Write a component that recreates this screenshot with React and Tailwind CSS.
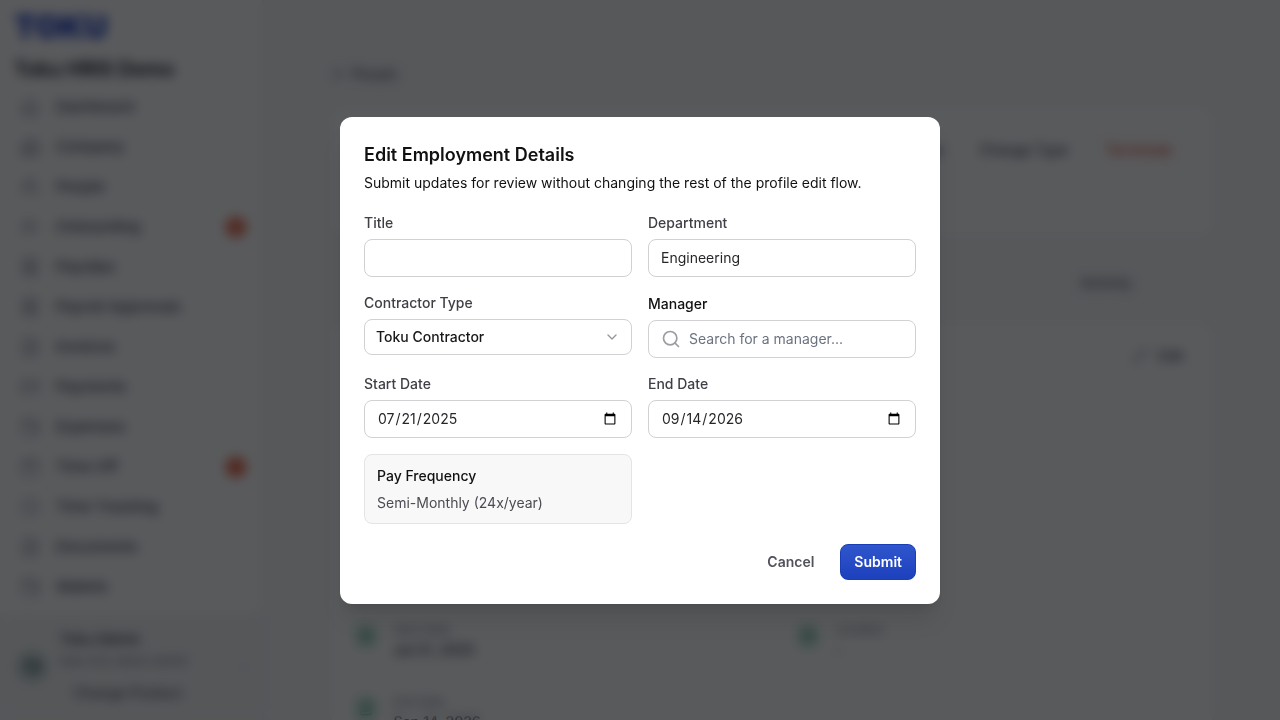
import { useState } from "react";
import {
  ArrowLeft,
  Building2,
  Calendar,
  ChevronDown,
  ChevronRight,
  Clock,
  CreditCard,
  FileText,
  House,
  Pencil,
  Receipt,
  Search,
  UserPlus,
  Users,
  Wallet,
} from "lucide-react";

const navItems = [
  { label: "Dashboard", icon: House },
  { label: "Company", icon: Building2 },
  { label: "People", icon: Users },
  { label: "Onboarding", icon: UserPlus, badge: 2 },
  { label: "Payslips", icon: Receipt },
  { label: "Payroll Approvals", icon: Receipt },
  { label: "Invoices", icon: FileText },
  { label: "Payments", icon: CreditCard },
  { label: "Expenses", icon: Wallet },
  { label: "Time Off", icon: Calendar, badge: 1 },
  { label: "Time Tracking", icon: Clock },
  { label: "Documents", icon: FileText },
  { label: "Wallets", icon: Wallet },
];

const detailRows = [
  [],
  [],
  [],
  [["Start Date", "Jul 21, 2025"], ["Location", "-"]],
  [["End Date", "Sep 14, 2026"]],
];

const labelClass = "text-sm leading-5 font-medium text-[#3f3f46]";
const inputClass =
  "w-full h-[38px] rounded-lg border border-[#d1d1d4] bg-white px-3 text-sm leading-5 text-[#27272a] outline-none";

/* ======================
SIDEBAR
====================== */

function Sidebar() {
  return (
    <aside className="w-[263px] shrink-0 flex flex-col bg-white border-r border-gray-200">
      <div className="flex-1 px-3.5 pt-[9px]">
        <div className="text-[32px] leading-9 font-black text-[#1d3fc4]">
          TOKU
        </div>
        <h2 className="mt-3 text-xl leading-6 font-semibold text-gray-950">
          Toku HRIS Demo
        </h2>

        <nav className="mt-2 flex flex-col gap-1">
          {navItems.map(({ label, icon: Icon, badge }) => (
            <a
              key={label}
              href="#"
              className="flex h-9 items-center gap-4 pl-1.5 pr-0.5 text-[15px] font-medium text-gray-700"
            >
              <Icon size={20} strokeWidth={1.5} className="text-gray-500" />
              {label}
              {badge && (
                <span className="ml-auto flex h-5 w-5 items-center justify-center rounded-full bg-[#e5532f] text-xs text-white">
                  {badge}
                </span>
              )}
            </a>
          ))}
        </nav>
      </div>

      <div className="flex h-[107px] items-center gap-3 bg-[#f5f5f6] pl-4 pr-3">
        <div className="flex h-8 w-8 items-center justify-center rounded-full bg-[#c4d4d0] text-sm font-semibold text-[#35524a]">
          TA
        </div>
        <div className="flex-1">
          <p className="text-sm leading-5 font-semibold text-gray-700">
            Toku Admin
          </p>
          <p className="mt-1 text-xs leading-4 text-gray-500">
            toku-hris-demo-admin
          </p>
          <button className="mt-3.5 px-3.5 text-sm leading-5 font-medium text-gray-600">
            Change Product
          </button>
        </div>
        <ChevronRight size={12} className="text-gray-400" />
      </div>
    </aside>
  );
}

/* ======================
PERFIL
====================== */

function ProfilePage() {
  return (
    <main className="flex-1 bg-[#f7f7f8] px-16 pt-16">
      <div className="mx-auto max-w-[880px]">
        <a href="#" className="flex h-5 items-center gap-1.5 text-sm text-gray-700">
          <ArrowLeft size={14} />
          People
        </a>

        <div className="mt-6 flex h-[127px] items-start justify-end gap-2 rounded-xl bg-white px-6 pt-6">
          <button className="h-9 rounded-lg px-3.5 text-sm font-medium text-gray-700">
            Message
          </button>
          <button className="h-9 rounded-lg px-3.5 text-sm font-medium text-gray-700">
            Change Type
          </button>
          <button className="h-9 rounded-lg border border-gray-200 px-3.5 text-sm font-medium text-[#d9442f]">
            Terminate
          </button>
        </div>

        <div className="flex h-[88px] items-center justify-end px-20 pt-2 text-sm font-medium text-gray-600">
          Activity
        </div>

        <section className="rounded-xl bg-white px-2">
          <div className="flex h-[66px] items-center justify-end px-5">
            <button className="flex items-center gap-2.5 text-sm font-medium text-gray-700">
              <Pencil size={16} strokeWidth={1.5} />
              Edit
            </button>
          </div>
          {detailRows.map((row, i) => (
            <div
              key={i}
              className="grid h-[72px] grid-cols-2 gap-x-11 border-t border-gray-200 px-3 pt-4"
            >
              {row.map(([label, value]) => (
                <div key={label} className="flex gap-3.5">
                  <div className="flex h-7 w-7 items-center justify-center rounded-lg bg-[#e6f6ef]">
                    <FileText size={16} className="text-[#0f8a5f]" />
                  </div>
                  <div>
                    <p className="text-xs leading-4 text-gray-500">{label}</p>
                    <p className="text-sm leading-6 font-medium text-gray-800">
                      {value}
                    </p>
                  </div>
                </div>
              ))}
            </div>
          ))}
        </section>
      </div>
    </main>
  );
}

/* ======================
MODAL
====================== */

function EditEmploymentModal() {
  const [form, setForm] = useState({
    title: "",
    department: "Engineering",
    contractorType: "toku",
    manager: "",
    startDate: "2025-07-21",
    endDate: "2026-09-14",
  });

  const handleChange = (e) => {
    setForm({ ...form, [e.target.name]: e.target.value });
  };

  return (
    <div className="fixed inset-0 flex items-center justify-center bg-[#08090c]/67 backdrop-blur-[6px]">
      <form
        role="dialog"
        aria-labelledby="modal-title"
        onSubmit={(e) => e.preventDefault()}
        className="w-full max-w-[600px] rounded-xl bg-white p-6 shadow-xl"
      >
        <h1
          id="modal-title"
          className="text-lg leading-7 font-semibold text-[#111113]"
        >
          Edit Employment Details
        </h1>
        <p className="mt-1 text-sm leading-5 text-[#111113]">
          Submit updates for review without changing the rest of the profile
          edit flow.
        </p>

        <div className="mt-5 grid grid-cols-2 gap-4">
          <div className="flex flex-col gap-1.5">
            <label htmlFor="title" className={labelClass}>
              Title
            </label>
            <input
              id="title"
              name="title"
              type="text"
              value={form.title}
              onChange={handleChange}
              className={inputClass}
            />
          </div>

          <div className="flex flex-col gap-1.5">
            <label htmlFor="department" className={labelClass}>
              Department
            </label>
            <input
              id="department"
              name="department"
              type="text"
              value={form.department}
              onChange={handleChange}
              className={inputClass}
            />
          </div>

          <div className="flex flex-col gap-1.5">
            <label htmlFor="contractorType" className={labelClass}>
              Contractor Type
            </label>
            <div className="relative">
              <select
                id="contractorType"
                name="contractorType"
                value={form.contractorType}
                onChange={handleChange}
                className="block h-9 w-full appearance-none rounded-lg border border-[#d1d1d4] bg-white px-[11px] text-sm leading-5 font-medium text-[#18181b] outline-none"
              >
                <option value="toku">Toku Contractor</option>
                <option value="direct">Direct Contractor</option>
              </select>
              <ChevronDown
                size={16}
                strokeWidth={2}
                className="pointer-events-none absolute top-2.5 right-3 text-[#96969c]"
              />
            </div>
          </div>

          <div className="flex flex-col gap-1.5">
            <label
              htmlFor="manager"
              className="text-sm leading-[21px] font-medium text-[#111113]"
            >
              Manager
            </label>
            <div className="flex h-[38px] items-center gap-2 rounded-lg border border-[#d1d1d4] bg-white px-3">
              <Search
                size={20}
                strokeWidth={2}
                className="shrink-0 text-[#9c9ca3]"
              />
              <input
                id="manager"
                name="manager"
                type="text"
                placeholder="Search for a manager..."
                value={form.manager}
                onChange={handleChange}
                className="w-full bg-transparent text-sm leading-5 outline-none placeholder:text-[#6b7280]"
              />
            </div>
          </div>

          <div className="flex flex-col gap-1.5">
            <label htmlFor="startDate" className={labelClass}>
              Start Date
            </label>
            <input
              id="startDate"
              name="startDate"
              type="date"
              value={form.startDate}
              onChange={handleChange}
              className={inputClass}
            />
          </div>

          <div className="flex flex-col gap-1.5">
            <label htmlFor="endDate" className={labelClass}>
              End Date
            </label>
            <input
              id="endDate"
              name="endDate"
              type="date"
              value={form.endDate}
              onChange={handleChange}
              className={inputClass}
            />
          </div>

          <div className="flex flex-col gap-1.5 rounded-lg border border-[#e4e4e7] bg-[#f8f8f8] px-3 py-2.5 text-sm">
            <p className="leading-[21px] font-medium text-[#111113]">
              Pay Frequency
            </p>
            <p className="leading-[21px] text-[#4b4b54]">
              Semi-Monthly (24x/year)
            </p>
          </div>
        </div>

        <div className="mt-5 flex justify-end gap-3">
          <button
            type="button"
            className="h-9 rounded-lg px-3.5 text-sm font-semibold text-[#52525b]"
          >
            Cancel
          </button>
          <button
            type="submit"
            className="h-9 rounded-lg border border-[#1c3eb4] bg-linear-to-b from-[#3056cd] to-[#1d40bd] px-[13px] text-sm font-semibold text-white"
          >
            Submit
          </button>
        </div>
      </form>
    </div>
  );
}

function App() {
  return (
    <div className="font-['Inter',sans-serif]">
      <div className="flex h-screen overflow-hidden">
        <Sidebar />
        <ProfilePage />
      </div>

      <EditEmploymentModal />
    </div>
  );
}

export default App;
